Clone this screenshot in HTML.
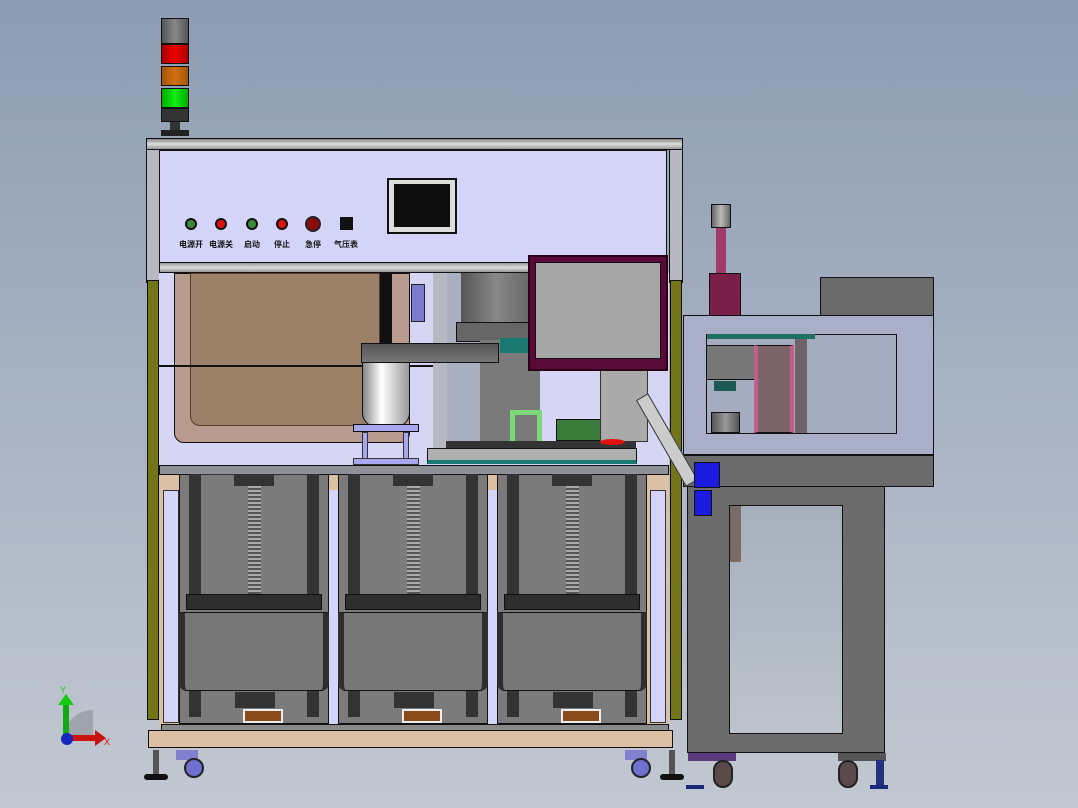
<!DOCTYPE html>
<html><head><meta charset="utf-8"><style>
body{margin:0;width:1078px;height:808px;overflow:hidden;background:linear-gradient(#8d9cb2,#a8b3c3 50%,#c2c8d1);position:relative;font-family:"Liberation Sans","Noto Sans CJK SC",sans-serif}
.b{position:absolute;box-sizing:border-box}
.k{border:1px solid #111}
.lbl{position:absolute;top:239px;font-size:8px;font-weight:bold;color:#111;width:30px;text-align:center}
</style></head><body>
<!-- light tower -->
<div class="b k" style="left:161px;top:18px;width:28px;height:26px;background:linear-gradient(90deg,#555,#888,#555)"></div>
<div class="b k" style="left:161px;top:44px;width:28px;height:20px;background:linear-gradient(90deg,#a00,#e00,#a00)"></div>
<div class="b k" style="left:161px;top:66px;width:28px;height:20px;background:linear-gradient(90deg,#a5540a,#d0700e,#a5540a)"></div>
<div class="b k" style="left:161px;top:88px;width:28px;height:20px;background:linear-gradient(90deg,#0a0,#1e1,#0a0)"></div>
<div class="b k" style="left:161px;top:108px;width:28px;height:14px;background:#333"></div>
<div class="b" style="left:170px;top:122px;width:10px;height:10px;background:#333"></div>
<div class="b" style="left:161px;top:130px;width:28px;height:6px;background:#222"></div>

<!-- right unit -->
<div class="b k" style="left:711px;top:204px;width:20px;height:24px;background:linear-gradient(90deg,#666,#bbb,#666)"></div>
<div class="b" style="left:716px;top:228px;width:10px;height:46px;background:#a03a68"></div>
<div class="b k" style="left:709px;top:273px;width:32px;height:43px;background:#7a2048"></div>
<div class="b k" style="left:820px;top:277px;width:114px;height:39px;background:#6b6b6b"></div>
<div class="b k" style="left:683px;top:315px;width:251px;height:140px;background:#a9aec9"></div>
<div class="b k" style="left:706px;top:334px;width:191px;height:100px;background:#a3adbf"></div>
<div class="b" style="left:707px;top:334px;width:108px;height:5px;background:#1f6e62"></div>
<div class="b k" style="left:706px;top:345px;width:49px;height:35px;background:#777"></div>
<div class="b k" style="left:754px;top:345px;width:40px;height:88px;background:#7c6468;border-left:4px solid #c06088;border-right:4px solid #c06088"></div>
<div class="b" style="left:795px;top:339px;width:12px;height:94px;background:#6e6266"></div>
<div class="b k" style="left:711px;top:412px;width:29px;height:21px;background:linear-gradient(90deg,#555,#999,#555)"></div>
<div class="b" style="left:714px;top:381px;width:22px;height:10px;background:#1a5a55"></div>
<div class="b k" style="left:683px;top:455px;width:251px;height:32px;background:#6b6b6b"></div>
<div class="b k" style="left:687px;top:486px;width:198px;height:267px;background:#6c6c6c"></div>
<div class="b k" style="left:729px;top:505px;width:114px;height:229px;background:linear-gradient(#a6b0bd,#bcc3cc)"></div>
<div class="b" style="left:730px;top:506px;width:11px;height:56px;background:#7a6a6a"></div>
<div class="b" style="left:688px;top:753px;width:48px;height:8px;background:#5a3a7a"></div>
<div class="b" style="left:838px;top:753px;width:48px;height:8px;background:#555"></div>
<div class="b" style="left:713px;top:760px;width:20px;height:28px;border-radius:10px;background:#5a4a4a;border:2px solid #222"></div>
<div class="b" style="left:838px;top:760px;width:20px;height:28px;border-radius:10px;background:#5a4a4a;border:2px solid #222"></div>
<div class="b" style="left:686px;top:785px;width:18px;height:4px;background:#1a2a7a"></div>
<div class="b" style="left:870px;top:785px;width:18px;height:4px;background:#1a2a7a"></div>
<div class="b" style="left:876px;top:760px;width:8px;height:25px;background:#223080"></div>

<!-- main frame posts -->
<div class="b k" style="left:146px;top:138px;width:14px;height:145px;background:#b8b8c0"></div>
<div class="b k" style="left:669px;top:138px;width:14px;height:145px;background:#b8b8c0"></div>
<div class="b k" style="left:147px;top:280px;width:12px;height:440px;background:#747418"></div>
<div class="b k" style="left:670px;top:280px;width:12px;height:440px;background:#747418"></div>
<div class="b k" style="left:146px;top:138px;width:537px;height:12px;background:linear-gradient(#888,#ddd,#999)"></div>
<!-- control panel -->
<div class="b k" style="left:159px;top:150px;width:508px;height:113px;background:#d4d4f8"></div>
<div class="b k" style="left:387px;top:178px;width:70px;height:56px;background:#ddd;border:2px solid #111"></div>
<div class="b" style="left:394px;top:184px;width:56px;height:43px;background:#0d0d0d"></div>
<div class="b" style="left:185px;top:218px;width:12px;height:12px;border-radius:50%;background:#3a8a3a;border:2px solid #111"></div>
<div class="b" style="left:215px;top:218px;width:12px;height:12px;border-radius:50%;background:#e01010;border:2px solid #111"></div>
<div class="b" style="left:246px;top:218px;width:12px;height:12px;border-radius:50%;background:#3a8a3a;border:2px solid #111"></div>
<div class="b" style="left:276px;top:218px;width:12px;height:12px;border-radius:50%;background:#e01010;border:2px solid #111"></div>
<div class="b" style="left:305px;top:216px;width:16px;height:16px;border-radius:50%;background:#8a0a0a;border:2px solid #222"></div>
<div class="b" style="left:340px;top:217px;width:13px;height:13px;background:#111"></div>
<div class="lbl" style="left:176px">电源开</div>
<div class="lbl" style="left:206px">电源关</div>
<div class="lbl" style="left:237px">启动</div>
<div class="lbl" style="left:267px">停止</div>
<div class="lbl" style="left:298px">急停</div>
<div class="lbl" style="left:331px">气压表</div>
<div class="b k" style="left:159px;top:262px;width:508px;height:11px;background:linear-gradient(#999,#ddd,#999)"></div>

<!-- upper chamber -->
<div class="b" style="left:159px;top:273px;width:510px;height:192px;background:#d6d6f4"></div>
<div class="b k" style="left:174px;top:273px;width:236px;height:170px;background:#b89a8e;border-radius:0 0 10px 10px"></div>
<div class="b" style="left:190px;top:273px;width:190px;height:153px;background:#9c8068;border-radius:0 0 10px 10px;border:1px solid #5a3a2a"></div>
<div class="b" style="left:380px;top:273px;width:12px;height:72px;background:#111"></div>
<div class="b" style="left:411px;top:284px;width:14px;height:38px;background:#7a7acc;border:1px solid #222"></div>
<div class="b" style="left:159px;top:365px;width:370px;height:2px;background:#111"></div>
<div class="b" style="left:433px;top:273px;width:14px;height:190px;background:#b8b8c0"></div>
<div class="b" style="left:447px;top:273px;width:83px;height:190px;background:#a8b0c0"></div>
<div class="b" style="left:461px;top:273px;width:70px;height:60px;background:linear-gradient(90deg,#555,#888,#666)"></div>
<div class="b k" style="left:456px;top:322px;width:80px;height:20px;background:#666"></div>
<div class="b" style="left:480px;top:340px;width:60px;height:105px;background:#7a7a7a"></div>
<div class="b" style="left:500px;top:338px;width:35px;height:15px;background:#1a7a72"></div>
<div class="b k" style="left:361px;top:343px;width:138px;height:20px;background:linear-gradient(#555,#777)"></div>
<div class="b k" style="left:362px;top:362px;width:48px;height:65px;background:linear-gradient(90deg,#888,#fff 40%,#999);border-radius:0 0 14px 14px"></div>
<div class="b k" style="left:353px;top:424px;width:66px;height:8px;background:#a8a8f0"></div>
<div class="b" style="left:362px;top:432px;width:6px;height:30px;background:#a8a8f0;border:1px solid #333"></div>
<div class="b" style="left:403px;top:432px;width:6px;height:30px;background:#a8a8f0;border:1px solid #333"></div>
<div class="b" style="left:353px;top:458px;width:66px;height:7px;background:#a8a8f0;border:1px solid #333"></div>
<div class="b" style="left:510px;top:410px;width:32px;height:35px;border:5px solid #7ada7a;border-bottom:none;background:transparent"></div>
<div class="b k" style="left:556px;top:419px;width:46px;height:22px;background:#3a7a3a"></div>
<div class="b" style="left:600px;top:370px;width:48px;height:72px;background:#aaa;border:1px solid #333"></div>
<div class="b" style="left:446px;top:441px;width:190px;height:8px;background:#333"></div>
<div class="b k" style="left:427px;top:448px;width:210px;height:16px;background:#b0b0b0;border-bottom:4px solid #1a7a72"></div>
<div class="b" style="left:600px;top:439px;width:25px;height:6px;background:#e01010;border-radius:50%"></div>
<div class="b" style="left:660px;top:390px;width:14px;height:100px;background:#ccc;transform:rotate(-30deg);border:1px solid #333"></div>
<div class="b k" style="left:694px;top:462px;width:26px;height:26px;background:#1a1ae0"></div>
<div class="b k" style="left:694px;top:490px;width:18px;height:26px;background:#1a1ae0"></div>
<!-- monitor -->
<div class="b" style="left:528px;top:255px;width:140px;height:116px;background:#5a0a38;border:2px solid #2a0018"></div>
<div class="b k" style="left:535px;top:262px;width:126px;height:97px;background:#a6a6a6"></div>

<!-- lower section -->
<div class="b" style="left:159px;top:465px;width:510px;height:262px;background:#dcc0a6"></div>
<div class="b k" style="left:159px;top:465px;width:510px;height:10px;background:#909098"></div>
<div class="b" style="left:163px;top:490px;width:16px;height:233px;background:#d4d4f8;border:1px solid #333"></div>
<div class="b" style="left:650px;top:490px;width:16px;height:233px;background:#d4d4f8;border:1px solid #333"></div>
<div class="b" style="left:329px;top:490px;width:9px;height:234px;background:#d4d4f8"></div>
<div class="b" style="left:488px;top:490px;width:9px;height:234px;background:#d4d4f8"></div>

<div class="b k" style="left:179px;top:474px;width:150px;height:250px;background:#7b7b7b"></div>
<div class="b k" style="left:338px;top:474px;width:150px;height:250px;background:#7b7b7b"></div>
<div class="b k" style="left:497px;top:474px;width:150px;height:250px;background:#7b7b7b"></div>
<!-- module details -->
<div class="b" style="left:189px;top:474px;width:12px;height:125px;background:#333"></div>
<div class="b" style="left:307px;top:474px;width:12px;height:125px;background:#333"></div>
<div class="b" style="left:348px;top:474px;width:12px;height:125px;background:#333"></div>
<div class="b" style="left:466px;top:474px;width:12px;height:125px;background:#333"></div>
<div class="b" style="left:507px;top:474px;width:12px;height:125px;background:#333"></div>
<div class="b" style="left:625px;top:474px;width:12px;height:125px;background:#333"></div>
<div class="b" style="left:234px;top:474px;width:40px;height:12px;background:#333"></div>
<div class="b" style="left:393px;top:474px;width:40px;height:12px;background:#333"></div>
<div class="b" style="left:552px;top:474px;width:40px;height:12px;background:#333"></div>
<div class="b" style="left:248px;top:486px;width:13px;height:110px;background:repeating-linear-gradient(#aaa 0 2px,#555 2px 4px)"></div>
<div class="b" style="left:407px;top:486px;width:13px;height:110px;background:repeating-linear-gradient(#aaa 0 2px,#555 2px 4px)"></div>
<div class="b" style="left:566px;top:486px;width:13px;height:110px;background:repeating-linear-gradient(#aaa 0 2px,#555 2px 4px)"></div>
<div class="b" style="left:189px;top:474px;width:130px;height:1px;background:#333"></div>
<div class="b k" style="left:186px;top:594px;width:136px;height:16px;background:#2e2e2e"></div>
<div class="b k" style="left:345px;top:594px;width:136px;height:16px;background:#2e2e2e"></div>
<div class="b k" style="left:504px;top:594px;width:136px;height:16px;background:#2e2e2e"></div>
<div class="b k" style="left:179px;top:612px;width:150px;height:79px;background:#777;border-radius:0 0 8px 8px;border-left:6px solid #2e2e2e;border-right:6px solid #2e2e2e"></div>
<div class="b k" style="left:338px;top:612px;width:150px;height:79px;background:#777;border-radius:0 0 8px 8px;border-left:6px solid #2e2e2e;border-right:6px solid #2e2e2e"></div>
<div class="b k" style="left:497px;top:612px;width:150px;height:79px;background:#777;border-radius:0 0 8px 8px;border-left:6px solid #2e2e2e;border-right:6px solid #2e2e2e"></div>
<div class="b" style="left:189px;top:691px;width:12px;height:26px;background:#333"></div>
<div class="b" style="left:307px;top:691px;width:12px;height:26px;background:#333"></div>
<div class="b" style="left:348px;top:691px;width:12px;height:26px;background:#333"></div>
<div class="b" style="left:466px;top:691px;width:12px;height:26px;background:#333"></div>
<div class="b" style="left:507px;top:691px;width:12px;height:26px;background:#333"></div>
<div class="b" style="left:625px;top:691px;width:12px;height:26px;background:#333"></div>
<div class="b" style="left:235px;top:692px;width:40px;height:16px;background:#333"></div>
<div class="b" style="left:394px;top:692px;width:40px;height:16px;background:#333"></div>
<div class="b" style="left:553px;top:692px;width:40px;height:16px;background:#333"></div>
<div class="b" style="left:243px;top:709px;width:40px;height:14px;background:#8a4a1a;border:2px solid #eee"></div>
<div class="b" style="left:402px;top:709px;width:40px;height:14px;background:#8a4a1a;border:2px solid #eee"></div>
<div class="b" style="left:561px;top:709px;width:40px;height:14px;background:#8a4a1a;border:2px solid #eee"></div>
<div class="b k" style="left:161px;top:724px;width:508px;height:7px;background:#8a8a8a"></div>
<div class="b k" style="left:148px;top:730px;width:525px;height:18px;background:#dcc0a6"></div>
<!-- feet -->
<div class="b" style="left:153px;top:750px;width:6px;height:24px;background:#555"></div>
<div class="b" style="left:144px;top:774px;width:24px;height:6px;background:#111;border-radius:3px"></div>
<div class="b" style="left:669px;top:750px;width:6px;height:24px;background:#555"></div>
<div class="b" style="left:660px;top:774px;width:24px;height:6px;background:#111;border-radius:3px"></div>
<div class="b" style="left:176px;top:750px;width:22px;height:10px;background:#8080d0"></div>
<div class="b" style="left:184px;top:758px;width:20px;height:20px;border-radius:50%;background:#7070d0;border:2px solid #222"></div>
<div class="b" style="left:625px;top:750px;width:22px;height:10px;background:#8080d0"></div>
<div class="b" style="left:631px;top:758px;width:20px;height:20px;border-radius:50%;background:#7070d0;border:2px solid #222"></div>

<!-- axis triad -->
<svg class="b" style="left:45px;top:685px" width="70" height="65">
<path d="M18 55 A30 30 0 0 1 48 25 L48 55Z" fill="#8a8f98" opacity=".6"/>
<rect x="18" y="18" width="6" height="36" fill="#1a1"/>
<polygon points="13,20 21,9 29,20" fill="#1c1"/>
<rect x="22" y="50" width="30" height="6" fill="#c11"/>
<polygon points="50,45 61,53 50,61" fill="#c11"/>
<circle cx="22" cy="54" r="6" fill="#1525c0"/>
<text x="15" y="8" font-size="9" fill="#1c1" font-family="Liberation Sans">Y</text>
<text x="59" y="60" font-size="9" fill="#d11" font-family="Liberation Sans">X</text>
</svg>
</body></html>
